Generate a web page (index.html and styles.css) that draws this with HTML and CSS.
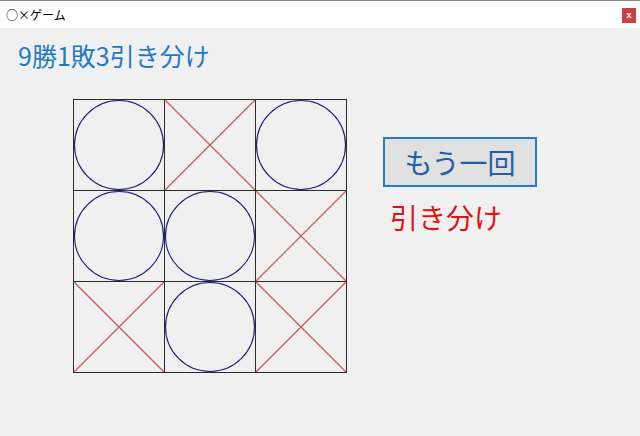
FILE: index.html
```html
<!DOCTYPE html>
<html lang="ja">
<head>
<meta charset="utf-8">
<title>○×ゲーム</title>
<link rel="stylesheet" href="styles.css">
</head>
<body>
<div class="window">
  <div class="titlebar">
    <span class="title">○×ゲーム</span>
    <span class="close">x</span>
  </div>
  <div class="content">
    <div class="score">9勝1敗3引き分け</div>
    <div class="play">
      <div class="board">
        <div class="cell"><svg viewBox="0 0 90 90"><circle class="mark-o" cx="45" cy="45" r="44.5"/></svg></div>
        <div class="cell"><svg viewBox="0 0 90 90"><path class="mark-x" d="M0 0L90 90M90 0L0 90"/></svg></div>
        <div class="cell"><svg viewBox="0 0 90 90"><circle class="mark-o" cx="45" cy="45" r="44.5"/></svg></div>
        <div class="cell"><svg viewBox="0 0 90 90"><circle class="mark-o" cx="45" cy="45" r="44.5"/></svg></div>
        <div class="cell"><svg viewBox="0 0 90 90"><circle class="mark-o" cx="45" cy="45" r="44.5"/></svg></div>
        <div class="cell"><svg viewBox="0 0 90 90"><path class="mark-x" d="M0 0L90 90M90 0L0 90"/></svg></div>
        <div class="cell"><svg viewBox="0 0 90 90"><path class="mark-x" d="M0 0L90 90M90 0L0 90"/></svg></div>
        <div class="cell"><svg viewBox="0 0 90 90"><circle class="mark-o" cx="45" cy="45" r="44.5"/></svg></div>
        <div class="cell"><svg viewBox="0 0 90 90"><path class="mark-x" d="M0 0L90 90M90 0L0 90"/></svg></div>
      </div>
      <div class="side">
        <button class="again">もう一回</button>
        <div class="result">引き分け</div>
      </div>
    </div>
  </div>
</div>
</body>
</html>
```

FILE: styles.css
```css
html, body {
  margin: 0;
  padding: 0;
  background: #f0f0f0;
}
body {
  font-family: "Noto Sans CJK JP", "Noto Sans", sans-serif;
  width: 640px;
  height: 436px;
  overflow: hidden;
}
.window {
  display: flex;
  flex-direction: column;
  height: 436px;
}
.titlebar {
  height: 27px;
  background: #ffffff;
  border-top: 1px solid #8a8a8a;
  display: flex;
  align-items: center;
  justify-content: space-between;
  padding: 0 4px 0 6px;
}
.title {
  font-size: 12px;
  color: #000;
  line-height: 1;
}
.close {
  width: 14px;
  height: 15px;
  background: #c94242;
  color: #fff;
  font-family: "Liberation Sans", sans-serif;
  font-size: 9px;
  font-weight: bold;
  display: flex;
  align-items: center;
  justify-content: center;
  margin-top: 1px;
}
.content {
  display: flex;
  flex-direction: column;
  padding: 0 0 0 18px;
}
.score {
  margin-top: 11px;
  font-size: 25px;
  line-height: 32px;
  color: #1f79c4;
  height: 32px;
}
.play {
  display: flex;
  margin-top: 28px;
  margin-left: 55px;
}
.board {
  display: grid;
  grid-template-columns: repeat(3, 91px);
  grid-template-rows: repeat(3, 91px);
  border-left: 1px solid #2a2a2a;
  border-top: 1px solid #2a2a2a;
}
.cell {
  box-sizing: border-box;
  border-right: 1px solid #2a2a2a;
  border-bottom: 1px solid #2a2a2a;
  width: 91px;
  height: 91px;
}
.cell svg {
  display: block;
  width: 90px;
  height: 90px;
  overflow: visible;
}
.mark-o {
  fill: none;
  stroke: #1c1c78;
  stroke-width: 1.1;
}
.mark-x {
  fill: none;
  stroke: #c45858;
  stroke-width: 1.2;
}
.side {
  display: flex;
  flex-direction: column;
  margin-left: 35px;
  padding-top: 38px;
}
.again {
  width: 154px;
  height: 50px;
  background: #e1e1e1;
  border: 2px solid #2b7bc3;
  color: #1f5fa8;
  font-family: "Noto Sans CJK JP", sans-serif;
  font-size: 28px;
  line-height: 1;
  padding: 0;
  margin-left: 1px;
}
.result {
  margin-top: 10px;
  margin-left: 8px;
  font-size: 28px;
  line-height: 40px;
  color: #e01414;
}
```
